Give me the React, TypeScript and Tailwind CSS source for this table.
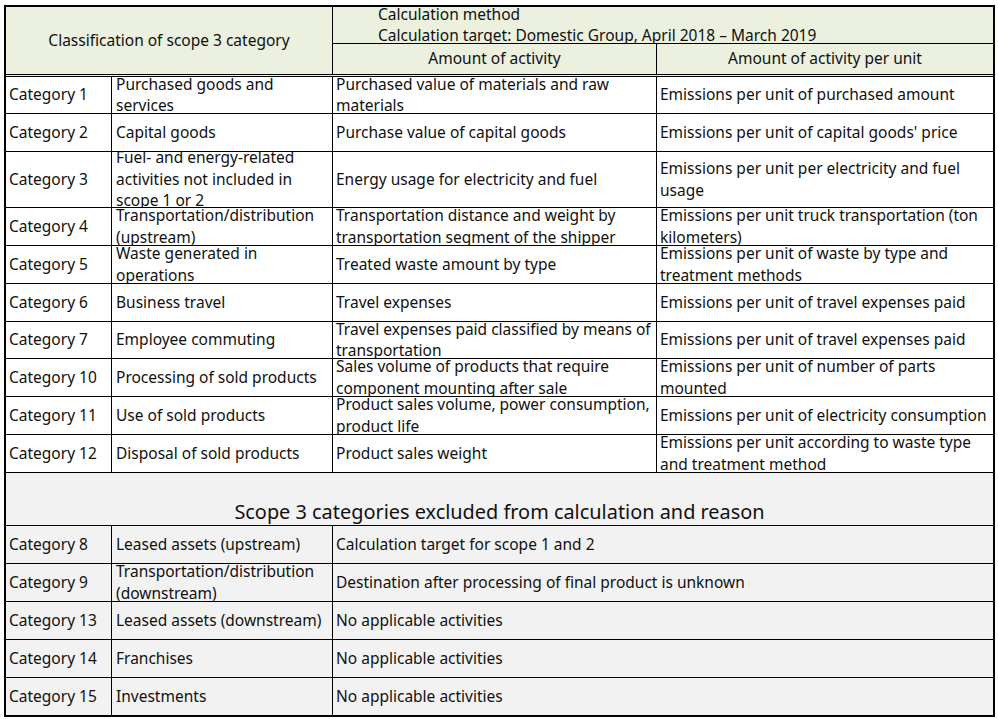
import React from "react";

type Row = { c: string; n: string; a: string; u: string; h: string };

const rows: Row[] = [
  { c: "Category 1", n: "Purchased goods and\nservices", a: "Purchased value of materials and raw\nmaterials", u: "Emissions per unit of purchased amount", h: "h-[37px]" },
  { c: "Category 2", n: "Capital goods", a: "Purchase value of capital goods", u: "Emissions per unit of capital goods' price", h: "h-[38px]" },
  { c: "Category 3", n: "Fuel- and energy-related\nactivities not included in\nscope 1 or 2", a: "Energy usage for electricity and fuel", u: "Emissions per unit per electricity and fuel\nusage", h: "h-[56px]" },
  { c: "Category 4", n: "Transportation/distribution\n(upstream)", a: "Transportation distance and weight by\ntransportation segment of the shipper", u: "Emissions per unit truck transportation (ton\nkilometers)", h: "h-[38px]" },
  { c: "Category 5", n: "Waste generated in\noperations", a: "Treated waste amount by type", u: "Emissions per unit of waste by type and\ntreatment methods", h: "h-[38px]" },
  { c: "Category 6", n: "Business travel", a: "Travel expenses", u: "Emissions per unit of travel expenses paid", h: "h-[38px]" },
  { c: "Category 7", n: "Employee commuting", a: "Travel expenses paid classified by means of\ntransportation", u: "Emissions per unit of travel expenses paid", h: "h-[37px]" },
  { c: "Category 10", n: "Processing of sold products", a: "Sales volume of products that require\ncomponent mounting after sale", u: "Emissions per unit of number of parts\nmounted", h: "h-[38px]" },
  { c: "Category 11", n: "Use of sold products", a: "Product sales volume, power consumption,\nproduct life", u: "Emissions per unit of electricity consumption", h: "h-[38px]" },
  { c: "Category 12", n: "Disposal of sold products", a: "Product sales weight", u: "Emissions per unit according to waste type\nand treatment method", h: "h-[38px]" },
];

type Ex = { c: string; n: string; r: string; last?: boolean };
const excluded: Ex[] = [
  { c: "Category 8", n: "Leased assets (upstream)", r: "Calculation target for scope 1 and 2" },
  { c: "Category 9", n: "Transportation/distribution\n(downstream)", r: "Destination after processing of final product is unknown" },
  { c: "Category 13", n: "Leased assets (downstream)", r: "No applicable activities" },
  { c: "Category 14", n: "Franchises", r: "No applicable activities" },
  { c: "Category 15", n: "Investments", r: "No applicable activities", last: true },
];

function Cell({ children, className = "" }: { children: React.ReactNode; className?: string }) {
  return (
    <div className={`flex h-full items-center overflow-hidden pl-[3px] ${className}`}>
      <div className="whitespace-pre">{children}</div>
    </div>
  );
}

export default function App() {
  return (
    <div className="min-h-[719px] w-[998px] bg-white pl-[4px] pt-[5px]">
      <div className="w-[991px] border-2 border-black font-['Noto_Sans','Open_Sans',sans-serif] text-[15.5px] leading-[21.5px] text-[#111]">
        {/* header */}
        <div className="flex h-[70px] border-b-[3px] border-double border-black bg-[#ebf0df]">
          <div className="flex w-[327px] shrink-0 items-center justify-center border-r border-black">
            Classification of scope 3 category
          </div>
          <div className="flex flex-1 flex-col">
            <div className="flex h-[37px] items-center overflow-hidden border-b border-black pl-[45px]">
              <div className="whitespace-pre">{"Calculation method\nCalculation target: Domestic Group, April 2018 \u2013 March 2019"}</div>
            </div>
            <div className="flex h-[30px]">
              <div className="flex w-[324px] shrink-0 items-center justify-center border-r border-black">Amount of activity</div>
              <div className="flex flex-1 items-center justify-center">Amount of activity per unit</div>
            </div>
          </div>
        </div>

        {/* body */}
        {rows.map((r) => (
          <div key={r.c} className={`flex border-b border-black bg-white ${r.h}`}>
            <Cell className="w-[106px] shrink-0 border-r border-black">{r.c}</Cell>
            <Cell className="w-[221px] shrink-0 border-r border-black pl-[4px]">{r.n}</Cell>
            <Cell className="w-[324px] shrink-0 border-r border-black">{r.a}</Cell>
            <Cell className="flex-1">{r.u}</Cell>
          </div>
        ))}

        {/* excluded title */}
        <div className="flex h-[53px] items-end justify-center border-b border-black bg-[#f2f2f2] text-[19.9px] leading-[27px]">
          Scope 3 categories excluded from calculation and reason
        </div>

        {excluded.map((r) => (
          <div
            key={r.c}
            className={`flex bg-[#f2f2f2] ${r.last ? "h-[37px]" : "h-[38px] border-b border-black"}`}
          >
            <Cell className="w-[106px] shrink-0 border-r border-black">{r.c}</Cell>
            <Cell className="w-[221px] shrink-0 border-r border-black pl-[4px]">{r.n}</Cell>
            <Cell className="flex-1">{r.r}</Cell>
          </div>
        ))}
      </div>
    </div>
  );
}
